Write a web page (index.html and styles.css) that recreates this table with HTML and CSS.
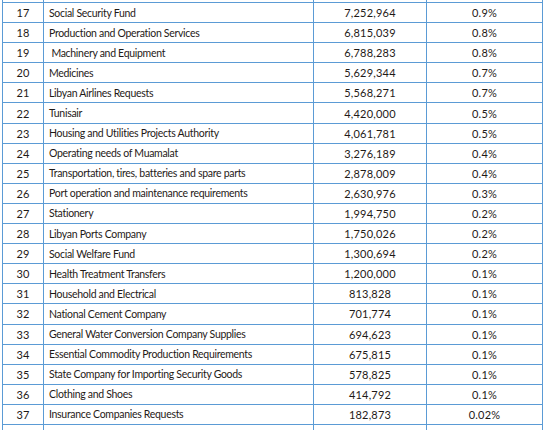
FILE: index.html
```html
<!DOCTYPE html>
<html lang="en">
<head>
    <meta charset="UTF-8">
    <title>Expenditure by Beneficiary</title>
    <link rel="stylesheet" href="styles.css">
</head>
<body>
<table class="tabella">
    <colgroup>
        <col class="c-num">
        <col class="c-nome">
        <col class="c-valore">
        <col class="c-perc">
    </colgroup>
    <tbody>
        <!-- riga tagliata sopra -->
        <tr class="taglio-alto"><td></td><td></td><td></td><td></td></tr>
        <tr><td>17</td><td class="nome">Social Security Fund</td><td>7,252,964</td><td>0.9%</td></tr>
        <tr><td>18</td><td class="nome">Production and Operation Services</td><td>6,815,039</td><td>0.8%</td></tr>
        <tr><td>19</td><td class="nome">&nbsp;Machinery and Equipment</td><td>6,788,283</td><td>0.8%</td></tr>
        <tr><td>20</td><td class="nome">Medicines</td><td>5,629,344</td><td>0.7%</td></tr>
        <tr><td>21</td><td class="nome">Libyan Airlines Requests</td><td>5,568,271</td><td>0.7%</td></tr>
        <tr><td>22</td><td class="nome">Tunisair</td><td>4,420,000</td><td>0.5%</td></tr>
        <tr><td>23</td><td class="nome">Housing and Utilities Projects Authority</td><td>4,061,781</td><td>0.5%</td></tr>
        <tr><td>24</td><td class="nome">Operating needs of Muamalat</td><td>3,276,189</td><td>0.4%</td></tr>
        <tr><td>25</td><td class="nome">Transportation, tires, batteries and spare parts</td><td>2,878,009</td><td>0.4%</td></tr>
        <tr><td>26</td><td class="nome">Port operation and maintenance requirements</td><td>2,630,976</td><td>0.3%</td></tr>
        <tr><td>27</td><td class="nome">Stationery</td><td>1,994,750</td><td>0.2%</td></tr>
        <tr><td>28</td><td class="nome">Libyan Ports Company</td><td>1,750,026</td><td>0.2%</td></tr>
        <tr><td>29</td><td class="nome">Social Welfare Fund</td><td>1,300,694</td><td>0.2%</td></tr>
        <tr><td>30</td><td class="nome">Health Treatment Transfers</td><td>1,200,000</td><td>0.1%</td></tr>
        <tr><td>31</td><td class="nome">Household and Electrical</td><td>813,828</td><td>0.1%</td></tr>
        <tr><td>32</td><td class="nome">National Cement Company</td><td>701,774</td><td>0.1%</td></tr>
        <tr><td>33</td><td class="nome">General Water Conversion Company Supplies</td><td>694,623</td><td>0.1%</td></tr>
        <tr><td>34</td><td class="nome">Essential Commodity Production Requirements</td><td>675,815</td><td>0.1%</td></tr>
        <tr><td>35</td><td class="nome">State Company for Importing Security Goods</td><td>578,825</td><td>0.1%</td></tr>
        <tr><td>36</td><td class="nome">Clothing and Shoes</td><td>414,792</td><td>0.1%</td></tr>
        <tr><td>37</td><td class="nome">Insurance Companies Requests</td><td>182,873</td><td>0.02%</td></tr>
        <!-- riga tagliata sotto -->
        <tr class="taglio-basso"><td></td><td></td><td></td><td></td></tr>
    </tbody>
</table>
</body>
</html>
```

FILE: styles.css
```css
body {
    margin: 0;
    padding: 0 0 0 2px;
    font-family: Lato, "Open Sans", sans-serif;
    background: white;
    overflow: hidden;
}

.tabella {
    border-collapse: collapse;
    table-layout: fixed;
    width: 541px;
    font-size: 11px;
    color: #1f1a17;
}

.c-num { width: 41px; }
.c-nome { width: 270px; }
.c-valore { width: 113px; }
.c-perc { width: 116px; }

.tabella td {
    border: 1px solid #5b9bd5;
    height: 19.1px;
    padding: 0;
    text-align: center;
    white-space: nowrap;
    overflow: hidden;
    letter-spacing: 0.2px;
}

.tabella td.nome {
    text-align: left;
    padding-left: 5px;
    font-size: 10.5px;
    letter-spacing: -0.3px;
}

.taglio-alto td {
    height: 2px;
    border-top: none;
}

.taglio-basso td {
    height: 10px;
    border-bottom: none;
}
```
